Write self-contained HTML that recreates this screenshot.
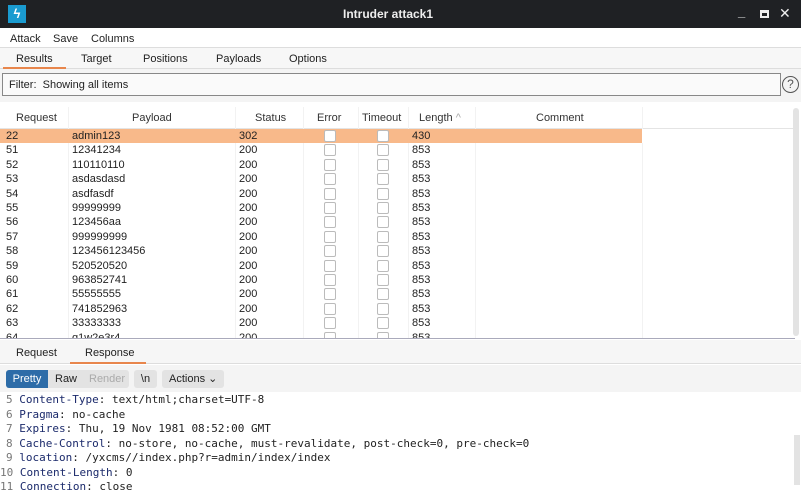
<!DOCTYPE html>
<html><head><style>
*{margin:0;padding:0;box-sizing:border-box}
body{width:801px;height:485px;overflow:hidden;background:#fff;font-family:"Liberation Sans","DejaVu Sans",sans-serif;font-size:11px;color:#222;position:relative}
.a{position:absolute}
.title{left:0;top:0;width:801px;height:28px;background:#1f2124;color:#eee;font-size:12px}
.row{position:absolute;left:0;width:795px;height:14.4px;line-height:14.4px;font-size:11px}
.row span{position:absolute}
.cb{position:absolute;width:12px;height:12px;border:1px solid #bbb;background:#fff;border-radius:2px;top:1px}
.code{position:absolute;left:6px;font-family:"DejaVu Sans Mono","Liberation Mono",monospace;font-size:11px;color:#222;white-space:pre}
.code b{color:#1b2a6b;font-weight:normal}
.code i{font-style:normal;color:#777}
.vl{position:absolute;top:3px;width:1px;height:235px;background:#f2f2f2}
</style></head><body>
<div class="a title">
 <div class="a" style="left:8px;top:5px;width:18px;height:18px;background:#1a9bd0;color:#fff;font-size:13px;text-align:center;line-height:18px;font-weight:bold">ϟ</div>
 <div class="a" style="left:343px;top:7px;font-weight:bold">Intruder attack1</div>
 <div class="a" style="left:738px;top:4px;font-weight:bold;font-size:13px">_</div>
 <div class="a" style="left:760px;top:10px;width:9px;height:8px;border:2px solid #eee;border-top-width:3px"></div>
 <div class="a" style="left:779px;top:5px;font-weight:bold;font-size:14px">✕</div>
</div>
<div class="a" style="left:0;top:28px;width:801px;height:20px;border-bottom:1px solid #ddd"></div>
<div class="a" style="left:10px;top:33px">Attack</div>
<div class="a" style="left:53px;top:33px">Save</div>
<div class="a" style="left:91px;top:33px">Columns</div>
<div class="a" style="left:0;top:48px;width:801px;height:21px;background:#f7f7f7;border-bottom:1px solid #ddd"></div>
<div class="a" style="left:16px;top:53px">Results</div>
<div class="a" style="left:3px;top:67px;width:63px;height:2px;background:#e8864c"></div>
<div class="a" style="left:81px;top:53px">Target</div>
<div class="a" style="left:143px;top:53px">Positions</div>
<div class="a" style="left:216px;top:53px">Payloads</div>
<div class="a" style="left:289px;top:53px">Options</div>
<div class="a" style="left:0;top:69px;width:801px;height:33px;background:#f4f4f4"></div>
<div class="a" style="left:2px;top:73px;width:779px;height:23px;border:1px solid #888;background:#fafafa"></div>
<div class="a" style="left:9px;top:79px">Filter:&nbsp; Showing all items</div>
<div class="a" style="left:782px;top:76px;width:17px;height:17px;border:1.5px solid #555;border-radius:50%;text-align:center;line-height:14px;font-size:12px;color:#555">?</div>
<div class="a" style="left:0;top:104px;width:795px;height:235px;border-bottom:1px solid #aab;background:#fff;overflow:hidden">
 <div class="a" style="left:0;top:3px;width:795px;height:22px;border-bottom:1px solid #e4e4e4;color:#333">
  <span class="a" style="left:16px;top:5px">Request</span>
  <span class="a" style="left:132px;top:5px">Payload</span>
  <span class="a" style="left:255px;top:5px">Status</span>
  <span class="a" style="left:317px;top:5px">Error</span>
  <span class="a" style="left:362px;top:5px">Timeout</span>
  <span class="a" style="left:419px;top:5px">Length <span style="color:#aaa">^</span></span>
  <span class="a" style="left:536px;top:5px">Comment</span>
 </div>
 <div class="vl" style="left:68px"></div>
 <div class="vl" style="left:235px"></div>
 <div class="vl" style="left:303px"></div>
 <div class="vl" style="left:358px"></div>
 <div class="vl" style="left:408px"></div>
 <div class="vl" style="left:475px"></div>
 <div class="vl" style="left:642px"></div>
 <div id="rows" class="a" style="left:0;top:25px;width:795px;height:210px"></div>
</div>
<div class="a" style="left:793px;top:108px;width:6px;height:228px;background:#e3e3e3;border-radius:3px"></div>
<div class="a" style="left:395px;top:335px;color:#999;font-size:9px">...</div>
<div class="a" style="left:0;top:340px;width:801px;height:24px;background:#f6f6f6;border-bottom:1px solid #ddd"></div>
<div class="a" style="left:16px;top:347px">Request</div>
<div class="a" style="left:85px;top:347px">Response</div>
<div class="a" style="left:70px;top:362px;width:76px;height:2px;background:#e8864c"></div>
<div class="a" style="left:0;top:365px;width:801px;height:27px;background:#f4f4f4"></div>
<div class="a" style="left:6px;top:370px;width:123px;height:18px;background:#e3e3e3;border-radius:3px"></div>
<div class="a" style="left:6px;top:370px;width:42px;height:18px;background:#2d6ca8;color:#fff;border-radius:3px 0 0 3px;text-align:center;line-height:18px">Pretty</div>
<div class="a" style="left:55px;top:373px">Raw</div>
<div class="a" style="left:89px;top:373px;color:#aaa">Render</div>
<div class="a" style="left:134px;top:370px;width:23px;height:18px;background:#e3e3e3;border-radius:3px;text-align:center;line-height:18px">\n</div>
<div class="a" style="left:162px;top:370px;width:62px;height:18px;background:#e3e3e3;border-radius:3px;line-height:18px;padding-left:7px">Actions ⌄</div>
<div class="a" style="left:794px;top:435px;width:6px;height:50px;background:#e3e3e3"></div>
<div class="code" style="top:393px"><i>5</i> <b>Content-Type</b>: text/html;charset=UTF-8</div>
<div class="code" style="top:408px"><i>6</i> <b>Pragma</b>: no-cache</div>
<div class="code" style="top:422px"><i>7</i> <b>Expires</b>: Thu, 19 Nov 1981 08:52:00 GMT</div>
<div class="code" style="top:437px"><i>8</i> <b>Cache-Control</b>: no-store, no-cache, must-revalidate, post-check=0, pre-check=0</div>
<div class="code" style="top:451px"><i>9</i> <b>location</b>: /yxcms//index.php?r=admin/index/index</div>
<div class="code" style="top:466px;left:0"><i>10</i> <b>Content-Length</b>: 0</div>
<div class="code" style="top:480px;left:0"><i>11</i> <b>Connection</b>: close</div>
<script>
var d=[["22","admin123","302","430"],["51","12341234","200","853"],["52","110110110","200","853"],["53","asdasdasd","200","853"],["54","asdfasdf","200","853"],["55","99999999","200","853"],["56","123456aa","200","853"],["57","999999999","200","853"],["58","123456123456","200","853"],["59","520520520","200","853"],["60","963852741","200","853"],["61","55555555","200","853"],["62","741852963","200","853"],["63","33333333","200","853"],["64","q1w2e3r4","200","853"]];
var h="";d.forEach(function(r,i){h+='<div class="row" style="top:'+(i*14.4)+'px;'+(i==0?'background:linear-gradient(90deg,#f8b98a 642px,#fff 642px)':'')+'"><span style="left:6px">'+r[0]+'</span><span style="left:72px">'+r[1]+'</span><span style="left:239px">'+r[2]+'</span><div class="cb" style="left:324px"></div><div class="cb" style="left:377px"></div><span style="left:412px">'+r[3]+'</span></div>'});
document.getElementById("rows").innerHTML=h;
</script>
</body></html>
